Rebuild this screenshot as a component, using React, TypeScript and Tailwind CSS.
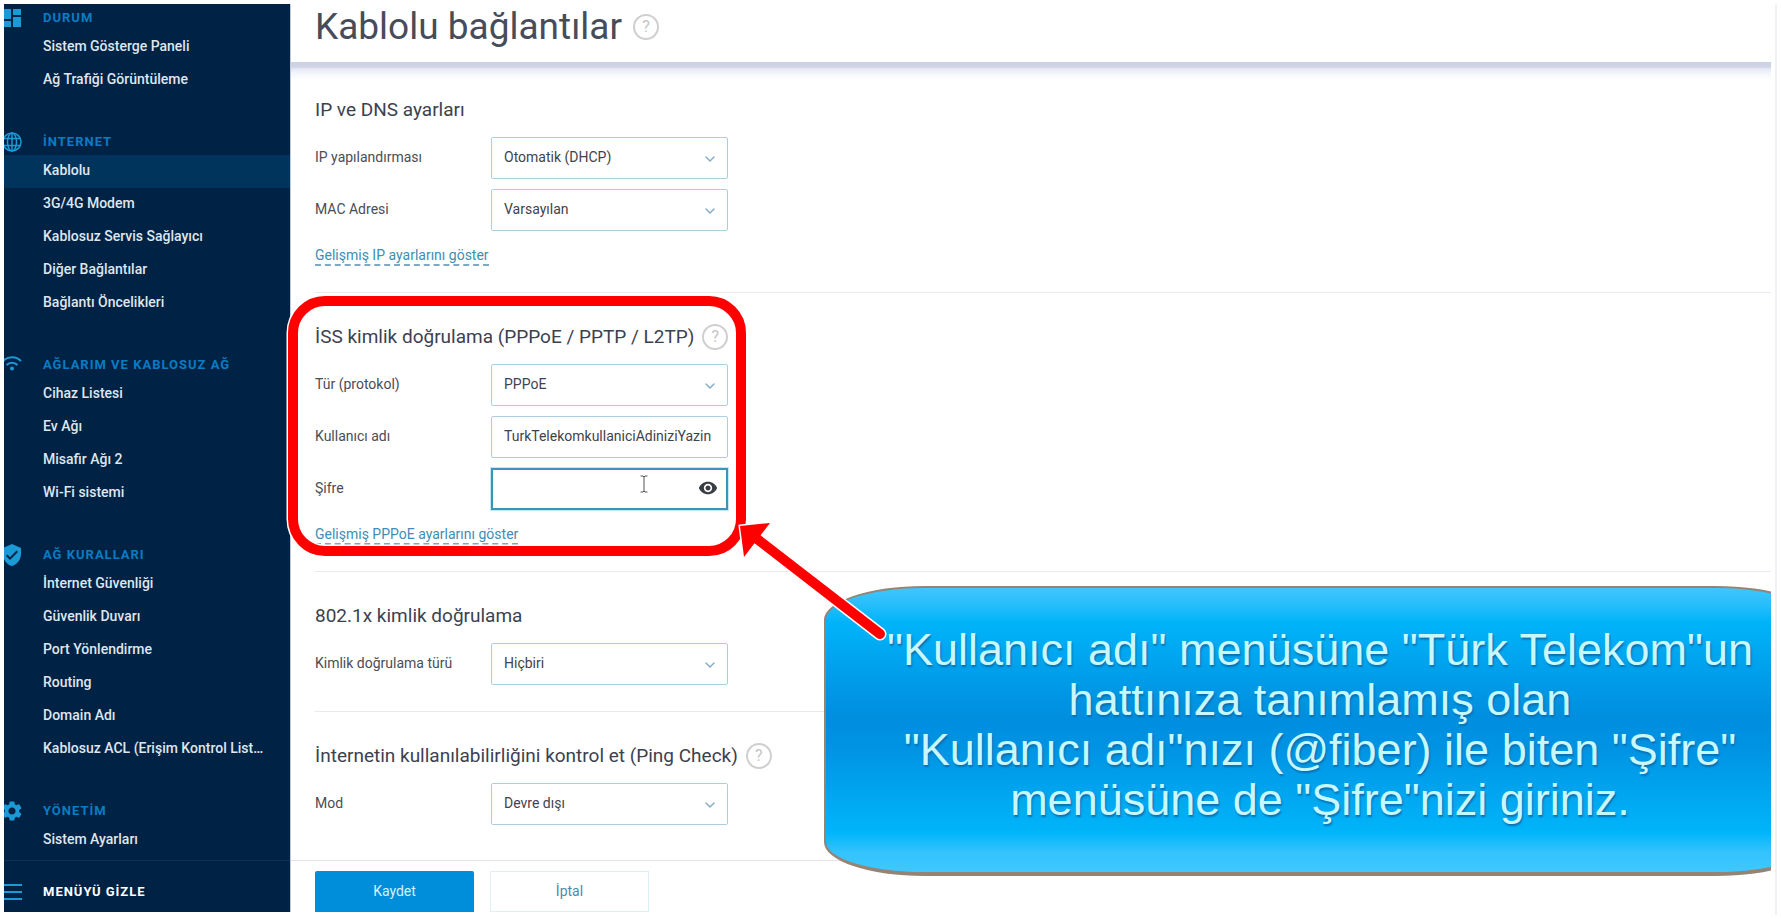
import React from 'react'
import { MdDashboard, MdSettings, MdVerifiedUser, MdVisibility } from 'react-icons/md'
import { ChevronDown } from 'lucide-react'

const GlobeIcon: React.FC = () => (
  <svg className="size-5" viewBox="0 0 20 20" fill="none" stroke="currentColor" strokeWidth="1.5" aria-hidden="true">
    <circle cx="10" cy="10" r="9" />
    <ellipse cx="10" cy="10" rx="4.5" ry="9" />
    <path d="M10 1v18M2 6.5h16M2 13.5h16" />
  </svg>
)

const WifiIcon: React.FC = () => (
  <svg className="-mt-1 size-5" viewBox="0 0 20 20" fill="none" stroke="currentColor" strokeWidth="2" aria-hidden="true">
    <path d="M1 8C6 3 14 3 19 8M4.5 12C7.5 9 12.5 9 15.5 12" />
    <circle cx="10" cy="15.5" r="2" fill="currentColor" stroke="none" />
  </svg>
)

const MenuIcon: React.FC = () => (
  <svg className="size-6" viewBox="0 0 24 24" fill="none" stroke="currentColor" strokeWidth="2" aria-hidden="true">
    <path d="M3 5h19M3 12h19M3 19h19" />
  </svg>
)

const menuGroups = [
  {
    title: 'DURUM',
    icon: <MdDashboard className="size-6 shrink-0" />,
    items: ['Sistem Gösterge Paneli', 'Ağ Trafiği Görüntüleme'],
  },
  {
    title: 'İNTERNET',
    icon: <GlobeIcon />,
    items: ['Kablolu', '3G/4G Modem', 'Kablosuz Servis Sağlayıcı', 'Diğer Bağlantılar', 'Bağlantı Öncelikleri'],
  },
  {
    title: 'AĞLARIM VE KABLOSUZ AĞ',
    icon: <WifiIcon />,
    items: ['Cihaz Listesi', 'Ev Ağı', 'Misafir Ağı 2', 'Wi-Fi sistemi'],
  },
  {
    title: 'AĞ KURALLARI',
    icon: <MdVerifiedUser className="size-6 shrink-0" />,
    items: [
      'İnternet Güvenliği',
      'Güvenlik Duvarı',
      'Port Yönlendirme',
      'Routing',
      'Domain Adı',
      'Kablosuz ACL (Erişim Kontrol Listesi)',
    ],
  },
  {
    title: 'YÖNETİM',
    icon: <MdSettings className="size-6 shrink-0" />,
    items: ['Sistem Ayarları'],
  },
]

const Sidebar: React.FC = () => (
  <aside className="w-[286px] shrink-0 flex flex-col bg-[#002244] text-[#dfe6ee]">
    <nav className="flex-1 flex flex-col gap-[31px]">
      {menuGroups.map(group => (
        <div key={group.title}>
          <div className="h-[27px] flex items-center">
            <span className="w-[39px] shrink-0">
              <span className="-ml-1 flex w-6 justify-center text-[#1b9ad6]">{group.icon}</span>
            </span>
            <h2 className="text-[13px] font-bold tracking-[1px] text-[#0a7cc4]">{group.title}</h2>
          </div>
          <ul>
            {group.items.map(item => (
              <li key={item}>
                <a
                  href="#"
                  className={`block h-[33px] leading-[30px] pl-[39px] pr-5 text-[14px] font-medium truncate ${
                    item === 'Kablolu' ? 'bg-[#00345c]' : ''
                  }`}
                >
                  {item}
                </a>
              </li>
            ))}
          </ul>
        </div>
      ))}
    </nav>
    <button className="h-[52px] flex items-center border-t border-[#0a3354] pt-2.5 text-left text-white">
      <span className="w-[39px] shrink-0">
        <span className="-ml-1 flex w-6 text-[#1b9ad6]">
          <MenuIcon />
        </span>
      </span>
      <span className="text-[13px] font-bold tracking-[1px]">MENÜYÜ GİZLE</span>
    </button>
  </aside>
)

const HelpButton: React.FC = () => (
  <button
    type="button"
    aria-label="Yardım"
    className="size-[26px] shrink-0 rounded-full border-2 border-[#cfcfcf] text-[16px] leading-[22px] text-[#c4c4c4]"
  >
    ?
  </button>
)

interface SectionProps {
  title: string
  help?: boolean
  className?: string
  children: React.ReactNode
}

const Section: React.FC<SectionProps> = ({ title, help, className = '', children }) => (
  <section className={`pb-[26px] ${className}`}>
    <div className="mb-[14px] h-[26px] flex items-center gap-2">
      <h2 className="text-[19px] text-[#3c4150]">{title}</h2>
      {help && <HelpButton />}
    </div>
    {children}
  </section>
)

interface FieldProps {
  id: string
  label: string
  children: React.ReactNode
}

const Field: React.FC<FieldProps> = ({ id, label, children }) => (
  <div className="flex items-center">
    <label htmlFor={id} className="w-44 shrink-0 pb-0.5 text-[14px] text-[#4a4d55]">
      {label}
    </label>
    <div className="relative w-[237px]">{children}</div>
  </div>
)

const SelectField: React.FC<{ id: string; label: string; value: string }> = ({ id, label, value }) => (
  <Field id={id} label={label}>
    <select
      id={id}
      className="block h-[42px] w-full appearance-none rounded-xs border border-[#a9cfe0] bg-white px-3 pb-0.5 text-[14px] text-[#3f434c]"
    >
      <option>{value}</option>
    </select>
    <ChevronDown className="pointer-events-none absolute right-2.5 top-3.5 size-4 text-[#7fa9c4]" />
  </Field>
)

const AdvancedLink: React.FC<{ children: React.ReactNode }> = ({ children }) => (
  <a
    href="#"
    className="mt-[15px] block w-fit border-b-2 border-dashed border-[#7fa9c0] text-[14px] leading-[18px] text-[#3f8db3]"
  >
    {children}
  </a>
)

// Red frame around the login fields and the arrow that leads to it
const Highlight: React.FC = () => (
  <svg
    className="pointer-events-none absolute left-0 top-0"
    width="900"
    height="660"
    viewBox="4 4 900 660"
    fill="none"
    aria-hidden="true"
  >
    <rect x="293" y="301" width="448" height="250" rx="32" stroke="#fff" strokeWidth="13" />
    <rect x="293" y="301" width="448" height="250" rx="32" stroke="#f00" strokeWidth="10" />
    <g strokeLinejoin="miter">
      <path d="M757 539L880 634" stroke="#fff" strokeWidth="13" strokeLinecap="round" />
      <path d="M740 526L770 523L744 557Z" fill="#f00" stroke="#fff" strokeWidth="3" />
      <path d="M740 526L770 523L744 557Z" fill="#f00" />
      <path d="M752 535L880 634" stroke="#f00" strokeWidth="10" strokeLinecap="round" />
    </g>
  </svg>
)

const Callout: React.FC = () => (
  <div className="absolute left-[820px] top-[582px] h-[290px] w-[992px] rounded-[100px/34px] border-2 border-b-4 border-[#958473] bg-[linear-gradient(180deg,#3fc6fd_0%,#2cbffc_5%,#00b4f9_12%,#0098e6_36%,#008edf_46%,#0093e3_56%,#00b5fa_86%,#33c3fd_93%,#3fc8fe_100%)] pt-[37px] text-center font-['Liberation_Sans',Arial,sans-serif] text-[45px] leading-[50px] text-[#c8f8ff] whitespace-nowrap [text-shadow:1px_2px_2px_#0a6fae]">
    <p>"Kullanıcı adı" menüsüne "Türk Telekom"un</p>
    <p>hattınıza tanımlamış olan</p>
    <p>"Kullanıcı adı"nızı (@fiber) ile biten "Şifre"</p>
    <p>menüsüne de "Şifre"nizi giriniz.</p>
  </div>
)

export default function App() {
  return (
    <div className="flex min-h-screen bg-white pl-1 pt-1 pr-1 font-[Roboto,sans-serif]">
      <div className="relative mb-[7px] mr-1 flex flex-1 overflow-hidden">
        <Sidebar />

        <main className="flex flex-1 flex-col border-l border-[#c3c9d2]">
          <header className="flex h-[58px] items-center gap-[11px] pb-3 pl-6">
            <h1 className="text-[37px] leading-[46px] text-[#474c5a]">Kablolu bağlantılar</h1>
            <HelpButton />
          </header>
          <div className="h-[18px] bg-[linear-gradient(180deg,#cdd1e4_0,#d0d4e7_5px,#e6e9f6_7px,#f5f7fc_12px,#fff_18px)]" />

          <form className="flex flex-1 flex-col" onSubmit={e => e.preventDefault()}>
            <div className="flex-1 pl-6">
              <Section title="IP ve DNS ayarları" className="pt-[17px]">
                <div className="flex flex-col gap-2.5">
                  <SelectField id="ip-config" label="IP yapılandırması" value="Otomatik (DHCP)" />
                  <SelectField id="mac" label="MAC Adresi" value="Varsayılan" />
                </div>
                <AdvancedLink>Gelişmiş IP ayarlarını göster</AdvancedLink>
              </Section>

              <Section title="İSS kimlik doğrulama (PPPoE / PPTP / L2TP)" help className="border-t border-[#e8eaed] pt-[31px]">
                <div className="flex flex-col gap-2.5">
                  <SelectField id="protocol" label="Tür (protokol)" value="PPPoE" />
                  <Field id="username" label="Kullanıcı adı">
                    <input
                      id="username"
                      type="text"
                      defaultValue="TurkTelekomkullaniciAdiniziYazin"
                      className="block h-[42px] w-full rounded-xs border border-[#a9cfe0] pl-3 pr-2 pb-0.5 text-[14px] text-[#3f434c]"
                    />
                  </Field>
                  <Field id="password" label="Şifre">
                    <input
                      id="password"
                      type="password"
                      className="block h-[42px] w-full border-2 border-[#3e93b8] pl-3 pr-10 text-[14px] outline outline-[#bfeaf5]"
                    />
                    <button type="button" aria-label="Şifreyi göster" className="absolute right-2.5 top-2.5 text-[#3a3d42]">
                      <MdVisibility className="size-5" />
                    </button>
                    {/* Text cursor */}
                    <svg className="absolute left-[149px] top-[7px]" width="8" height="18" viewBox="0 0 8 18" fill="none" stroke="#555" aria-hidden="true">
                      <path d="M0.5 1h2.5l1 1 1-1h2.5M4 2v14M0.5 17h2.5l1-1 1 1h2.5" />
                    </svg>
                  </Field>
                </div>
                <AdvancedLink>Gelişmiş PPPoE ayarlarını göster</AdvancedLink>
              </Section>

              <Section title="802.1x kimlik doğrulama" className="border-t border-[#e8eaed] pt-[31px]">
                <SelectField id="auth-type" label="Kimlik doğrulama türü" value="Hiçbiri" />
              </Section>

              <Section title="İnternetin kullanılabilirliğini kontrol et (Ping Check)" help className="border-t border-[#e8eaed] pt-[31px]">
                <SelectField id="ping-mode" label="Mod" value="Devre dışı" />
              </Section>
            </div>

            <footer className="flex h-[52px] gap-4 border-t border-[#e2e4ea] pl-6 pt-2.5">
              <button type="submit" className="w-[159px] rounded-t-xs bg-[#008dd9] text-[14px] text-[#d5f1ff]">
                Kaydet
              </button>
              <button type="button" className="w-[159px] border border-[#e0eef5] text-[14px] text-[#4a8cad]">
                İptal
              </button>
            </footer>
          </form>
        </main>

        <Callout />
        <Highlight />
      </div>
      <div className="mb-1 w-0.5 bg-[#eef2f7]" />
    </div>
  )
}
